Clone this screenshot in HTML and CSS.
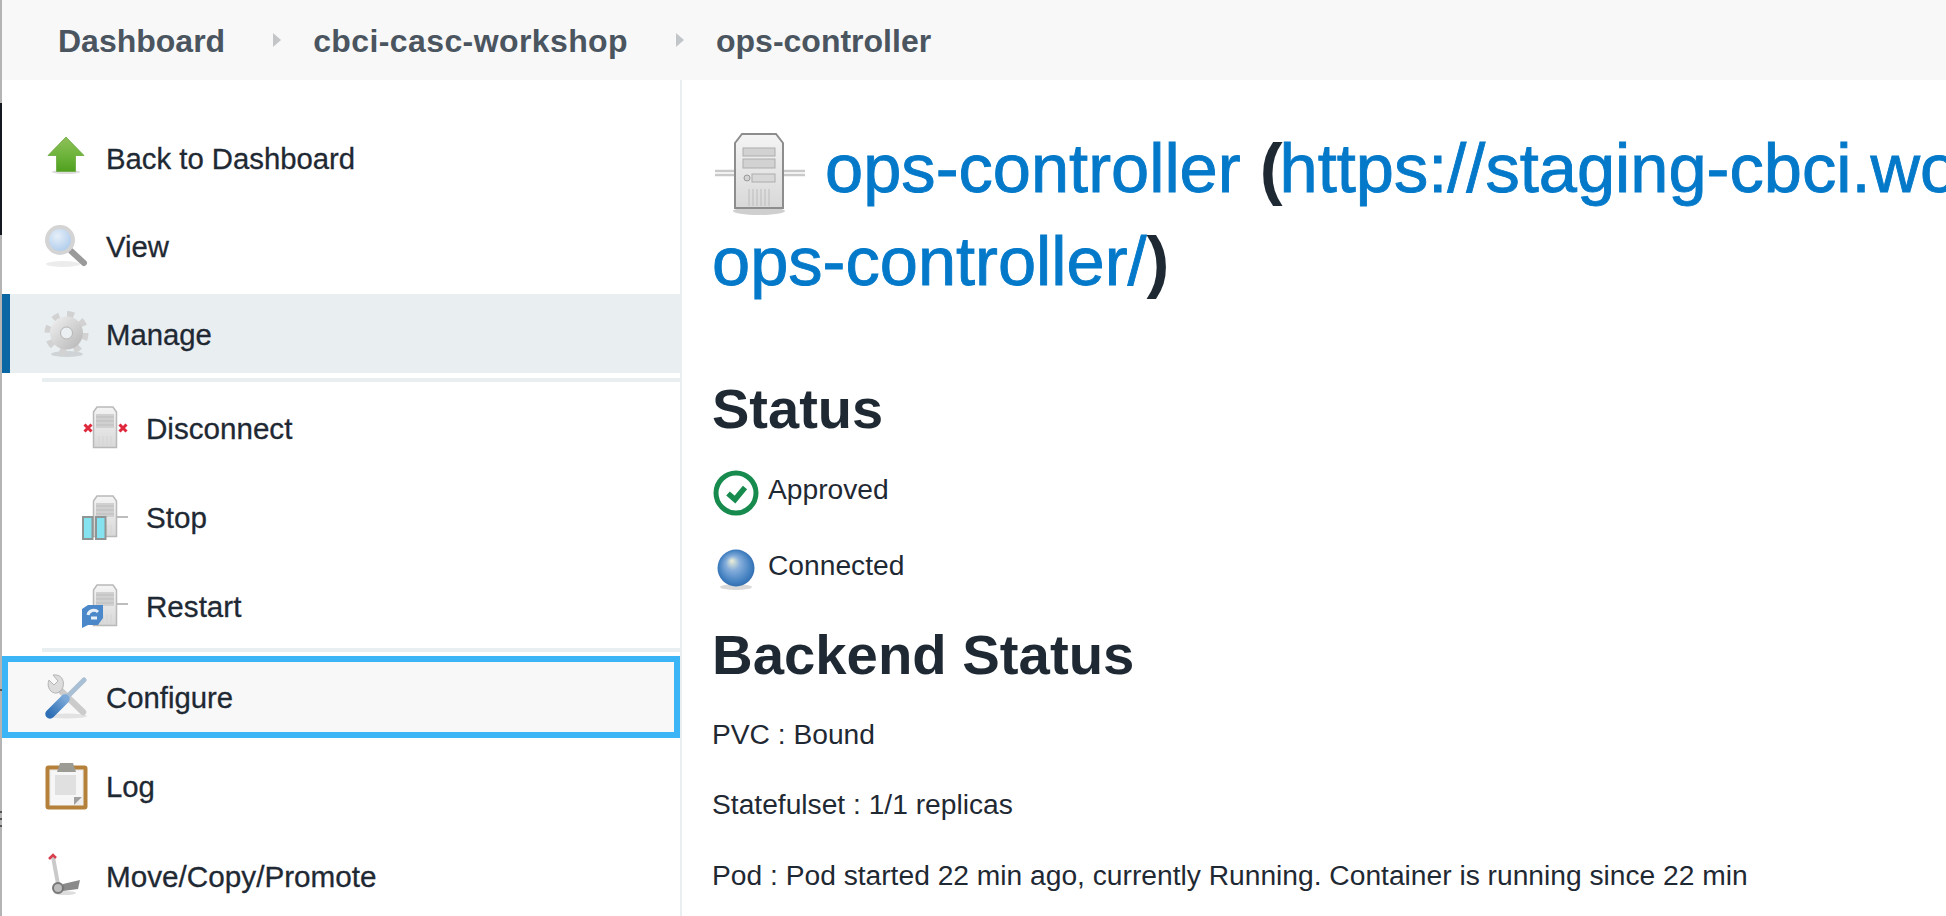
FILE: index.html
```html
<!DOCTYPE html>
<html lang="en">
<head>
<meta charset="utf-8">
<title>ops-controller</title>
<link rel="stylesheet" href="styles.css">
</head>
<body>
<svg class="defs" aria-hidden="true">
  <defs>
    <linearGradient id="gArrow" x1="0" y1="0" x2="0" y2="1"><stop offset="0" stop-color="#8fbf5a"/><stop offset=".55" stop-color="#6cb33a"/><stop offset="1" stop-color="#4fa01f"/></linearGradient>
    <radialGradient id="gLens" cx=".4" cy=".35" r=".7"><stop offset="0" stop-color="#e6eff9"/><stop offset="1" stop-color="#a9c8ea"/></radialGradient>
    <linearGradient id="gGear" x1="0" y1="0" x2="1" y2="1"><stop offset="0" stop-color="#f2f2f2"/><stop offset="1" stop-color="#b4b4b4"/></linearGradient>
    <linearGradient id="gBody" x1="0" y1="0" x2="0" y2="1"><stop offset="0" stop-color="#f4f4f4"/><stop offset="1" stop-color="#d8d8d8"/></linearGradient>
    <radialGradient id="gBall" cx=".5" cy=".5" r=".55" fx=".38" fy=".3"><stop offset="0" stop-color="#eef0d6"/><stop offset=".35" stop-color="#86aedb"/><stop offset=".8" stop-color="#3f7ebf"/><stop offset="1" stop-color="#2f68a8"/></radialGradient>
    <linearGradient id="gHandle" x1="0" y1="1" x2="1" y2="0"><stop offset="0" stop-color="#2f6fb5"/><stop offset="1" stop-color="#7aa8d8"/></linearGradient>
    <symbol id="tower" viewBox="0 0 48 48">
      <path d="M11.500 8 15 3H31l3.500 5V43.500H11.500Z" fill="url(#gBody)" stroke="#b9b9b9" stroke-width="1.500"/>
      <rect x="14" y="10" width="18" height="14" fill="#d0d0d0"/>
      <path d="M14 13H32M14 17H32M14 21H32" stroke="#bdbdbd" stroke-width="1"/>
      <path d="M17 32V41M21 32V41M25 32V41M29 32V41" stroke="#d4d4d4" stroke-width="1"/>
    </symbol>
  </defs>
</svg>
<div class="page">
  <div class="edge">
    <span class="edge-gap-top"></span>
    <span class="edge-black"></span>
    <span class="edge-gap-a"></span>
    <span class="edge-mark"></span>
    <span class="edge-gap-b"></span>
    <span class="edge-mark"></span>
    <span class="edge-gap-c"></span>
    <span class="edge-mark"></span>
    <span class="edge-gap-c"></span>
    <span class="edge-mark"></span>
  </div>
  <div class="column">
    <nav class="crumbs">
      <a class="crumb">Dashboard</a>
      <svg class="chev" viewBox="0 0 8 14"><path d="M0 0 8 7 0 14Z"/></svg>
      <a class="crumb crumb-wide">cbci-casc-workshop</a>
      <svg class="chev" viewBox="0 0 8 14"><path d="M0 0 8 7 0 14Z"/></svg>
      <a class="crumb">ops-controller</a>
    </nav>
    <div class="content">
      <aside class="side">
        <div class="menu">
          <a class="row">
            <svg class="ico" viewBox="0 0 48 48"><ellipse cx="23" cy="38" rx="14" ry="2" fill="#ddd"/><path d="M23 3 41 21.500H32.500V37.500H13.500V21.500H5Z" fill="url(#gArrow)" stroke="#6aa83c" stroke-width=".8"/></svg>
            <span>Back to Dashboard</span>
          </a>
          <a class="row">
            <svg class="ico" viewBox="0 0 48 48"><ellipse cx="20" cy="42" rx="17" ry="3" fill="#ececec"/><path d="M28 29 41 41" stroke="#9a9a9a" stroke-width="6" stroke-linecap="round"/><circle cx="17" cy="18" r="13" fill="url(#gLens)" stroke="#d4d4d4" stroke-width="4"/></svg>
            <span>View</span>
          </a>
          <a class="row row-active">
            <svg class="ico" viewBox="0 0 48 48"><ellipse cx="24" cy="44" rx="16" ry="3" fill="#cfd3d6"/><circle cx="23.500" cy="23" r="19" fill="none" stroke="#d2d2d2" stroke-width="6" stroke-dasharray="7 7.920"/><circle cx="23.500" cy="23" r="16.500" fill="url(#gGear)"/><circle cx="23.500" cy="23" r="6" fill="#eceff1" stroke="#b5b5b5" stroke-width="1"/></svg>
            <span>Manage</span>
          </a>
          <div class="sub">
            <a class="row">
              <svg class="ico" viewBox="0 0 48 48"><use href="#tower" width="48" height="48"/><path d="M2.500 20.500 9.500 27.500M9.500 20.500 2.500 27.500M37.500 20.500 44.500 27.500M44.500 20.500 37.500 27.500" stroke="#e0283c" stroke-width="3"/></svg>
              <span>Disconnect</span>
            </a>
            <a class="row">
              <svg class="ico" viewBox="0 0 48 48"><use href="#tower" width="48" height="48"/><path d="M35 24H46" stroke="#bdbdbd" stroke-width="2"/><rect x="1" y="24" width="9.500" height="22" fill="#85e2ef" stroke="#8f9494" stroke-width="2"/><rect x="14" y="24" width="9.500" height="22" fill="#85e2ef" stroke="#8f9494" stroke-width="2"/></svg>
              <span>Stop</span>
            </a>
            <a class="row">
              <svg class="ico" viewBox="0 0 48 48"><use href="#tower" width="48" height="48"/><path d="M35 22H46" stroke="#bdbdbd" stroke-width="2"/><path d="M0 27 6 23H21V36L16 43H6L0 46Z" fill="#4a88c9"/><path d="M6 33C7 28 13 27 16 30M15 36H9" stroke="#e6eff8" stroke-width="3" fill="none"/></svg>
              <span>Restart</span>
            </a>
          </div>
          <a class="row row-focus">
            <svg class="ico" viewBox="0 0 48 48"><ellipse cx="24" cy="43" rx="20" ry="2.500" fill="#e2e2e2"/><path d="M15 15 40 39" stroke="#cbcbcb" stroke-width="6.500" stroke-linecap="round"/><path d="M6 7 11 12 15 8 10 2C17 1 22 6 20 14 19 17 17 19 14 20 8 21 3 14 6 7Z" fill="#dcdcdc" stroke="#b3b3b3" stroke-width="1"/><path d="M23 25 41 7" stroke="#a9bfd4" stroke-width="5" stroke-linecap="round"/><path d="M7 41 22 26" stroke="url(#gHandle)" stroke-width="9.500" stroke-linecap="round"/></svg>
            <span>Configure</span>
          </a>
          <a class="row row-log">
            <svg class="ico" viewBox="0 0 48 48"><rect x="4.500" y="5.500" width="38" height="40" rx="1" fill="#ededed" stroke="#b5813a" stroke-width="4"/><path d="M8 9H39V36L31 43H8Z" fill="#f6f6f6"/><path d="M12 13H33V33H12Z" fill="#e0e0e0"/><path d="M31 43 39 35H31Z" fill="#a0a0a0"/><path d="M14 10 17 1H30L33 10Z" fill="#9c9c94"/></svg>
            <span>Log</span>
          </a>
          <a class="row row-move">
            <svg class="ico" viewBox="0 0 48 48"><path d="M10 5 15 32" stroke="#cacaca" stroke-width="4"/><path d="M6 7 10 3 13 6" stroke="#d8404f" stroke-width="2.500" fill="none"/><path d="M20 32 37 28 35 37 20 39Z" fill="#8a8a8a"/><ellipse cx="22" cy="41" rx="11" ry="2" fill="#ddd"/><circle cx="15" cy="36" r="5" fill="#bdbdbd" stroke="#777" stroke-width="2"/></svg>
            <span>Move/Copy/Promote</span>
          </a>
        </div>
      </aside>
      <main class="main">
        <h1 class="title"><svg class="server" viewBox="711 128 95 88">
            <ellipse cx="759" cy="210" rx="26" ry="4" fill="#cfcfcf"/>
            <path d="M715 170H735M715 174H735M783 170H805M783 174H805" stroke="#c9c9c9" stroke-width="2.500"/>
            <path d="M735 142 742 133H776L783 142V207H735Z" fill="url(#gBody)" stroke="#8d8d8d" stroke-width="2"/>
            <rect x="743" y="147" width="32" height="8" fill="#d2d2d2" stroke="#adadad"/>
            <rect x="743" y="158" width="32" height="9" fill="#d2d2d2" stroke="#adadad"/>
            <circle cx="747" cy="177" r="3" fill="#d2d2d2" stroke="#9a9a9a"/>
            <rect x="752" y="173" width="23" height="8" fill="#d8d8d8" stroke="#adadad"/>
            <path d="M749 188V205M753 188V205M757 188V205M761 188V205M765 188V205M769 188V205" stroke="#bcbcbc"/>
          </svg> <a class="link">ops-controller</a> <b class="paren paren-open">(</b><a class="link">https://staging-cbci.workshop.cb-sa.io/<br>ops-controller/</a><b class="paren">)</b></h1>
        <h2 class="head head-status">Status</h2>
        <div class="state">
          <svg class="state-ico" viewBox="0 0 46 46"><circle cx="23" cy="23" r="20" fill="#fff" stroke="#178a4e" stroke-width="5"/><path d="M15 23.500 22 29.500 32 17.500" fill="none" stroke="#178a4e" stroke-width="5.500"/></svg>
          <span class="state-text">Approved</span>
        </div>
        <div class="state state-next">
          <svg class="state-ico" viewBox="0 0 46 46"><ellipse cx="23" cy="41" rx="16" ry="3" fill="#d9d9d9"/><circle cx="23" cy="22" r="18.500" fill="url(#gBall)"/></svg>
          <span class="state-text">Connected</span>
        </div>
        <h2 class="head head-backend">Backend Status</h2>
        <p class="line">PVC : Bound</p>
        <p class="line">Statefulset : 1/1 replicas</p>
        <p class="line">Pod : Pod started 22 min ago, currently Running. Container is running since 22 min</p>
      </main>
    </div>
  </div>
</div>
</body>
</html>
```

FILE: styles.css
```css
* { box-sizing: border-box; }
html, body { margin: 0; padding: 0; height: 100%; overflow: hidden; background: #fff; }
body { font-family: "Liberation Sans", Arial, sans-serif; color: #1f2933; }
.defs { display: block; width: 0; height: 0; }

.page { display: flex; width: 1946px; height: 916px; overflow: hidden; }

.edge { width: 2px; flex: none; background: #b4b4b4; display: flex; flex-direction: column; }
.edge span { display: block; flex: none; }
.edge-gap-top { height: 103px; }
.edge-black { height: 132px; background: #14181f; }
.edge-gap-a { height: 454px; }
.edge-mark { height: 2px; background: #555; }
.edge-gap-b { height: 120px; }
.edge-gap-c { height: 5px; }

.column { flex: 1; min-width: 0; display: flex; flex-direction: column; }

.crumbs { height: 80px; flex: none; background: #f8f8f8; display: flex; align-items: center; padding-left: 56px; }
.crumb { font-size: 32px; font-weight: 700; color: #4a5560; white-space: nowrap; margin-top: 2px; }
.crumb-wide { letter-spacing: .4px; }
.chev { width: 8px; height: 14px; margin: 0 32px 0 48px; flex: none; }
.chev path { fill: #c3c6c9; }

.content { flex: 1; min-height: 0; display: flex; }
.side { width: 680px; flex: none; border-right: 2px solid #e9eef1; padding-top: 38px; }
.menu { display: flex; flex-direction: column; gap: 9px; }

.row { height: 79px; flex: none; display: flex; align-items: center; gap: 15px; padding-left: 41px; font-size: 29.300px; color: #1f2933; -webkit-text-stroke: .3px #1f2933; white-space: nowrap; }
.row span { margin-top: 2px; }
.ico { width: 48px; height: 48px; flex: none; filter: blur(.5px); }
.row-active { background: #e9eef1; box-shadow: inset 8px 0 0 #0a67a3; }

.sub { margin: -4px 0 -5px 40px; padding: 6px 0 3px; border-top: 4px solid #e9eef1; border-bottom: 4px solid #e9eef1; display: flex; flex-direction: column; gap: 10px; }
.sub .row { padding-left: 40px; gap: 16px; font-size: 29.600px; }

.row-focus { height: 82px; margin-bottom: -1px; padding-left: 35px; border: 6px solid #3bb5f6; background: #f8f8f8; }
.row-move { margin-top: 2px; font-size: 29.700px; }

.main { flex: 1; min-width: 0; overflow: hidden; padding: 42px 0 0 30px; }
.title { margin: 0; font-size: 68.600px; font-weight: 400; line-height: 93px; white-space: nowrap; }
.server { width: 95px; height: 88px; vertical-align: -15px; margin-bottom: -10px; margin-left: -1px; filter: blur(.4px); }
.link { color: #0479c9; -webkit-text-stroke: .9px #0479c9; }
.paren { color: #1f2933; font-weight: 700; }
.paren-open { margin-right: -3px; }

.head { margin: 0; font-size: 56px; line-height: 66px; font-weight: 700; color: #1f2933; }
.head-status { margin-top: 67.500px; }
.head-backend { margin-top: 30px; font-size: 56.300px; }

.state { display: flex; align-items: center; gap: 9px; height: 46px; padding-left: 1px; margin-top: 28px; font-size: 28.200px; }
.state-next { margin-top: 30px; }
.state-ico { width: 46px; height: 46px; flex: none; }
.state-text { margin-bottom: 7px; }

.line { margin: 0 0 30.500px; font-size: 28.200px; line-height: 40px; white-space: nowrap; }
.head-backend + .line { margin-top: 26px; }
```
